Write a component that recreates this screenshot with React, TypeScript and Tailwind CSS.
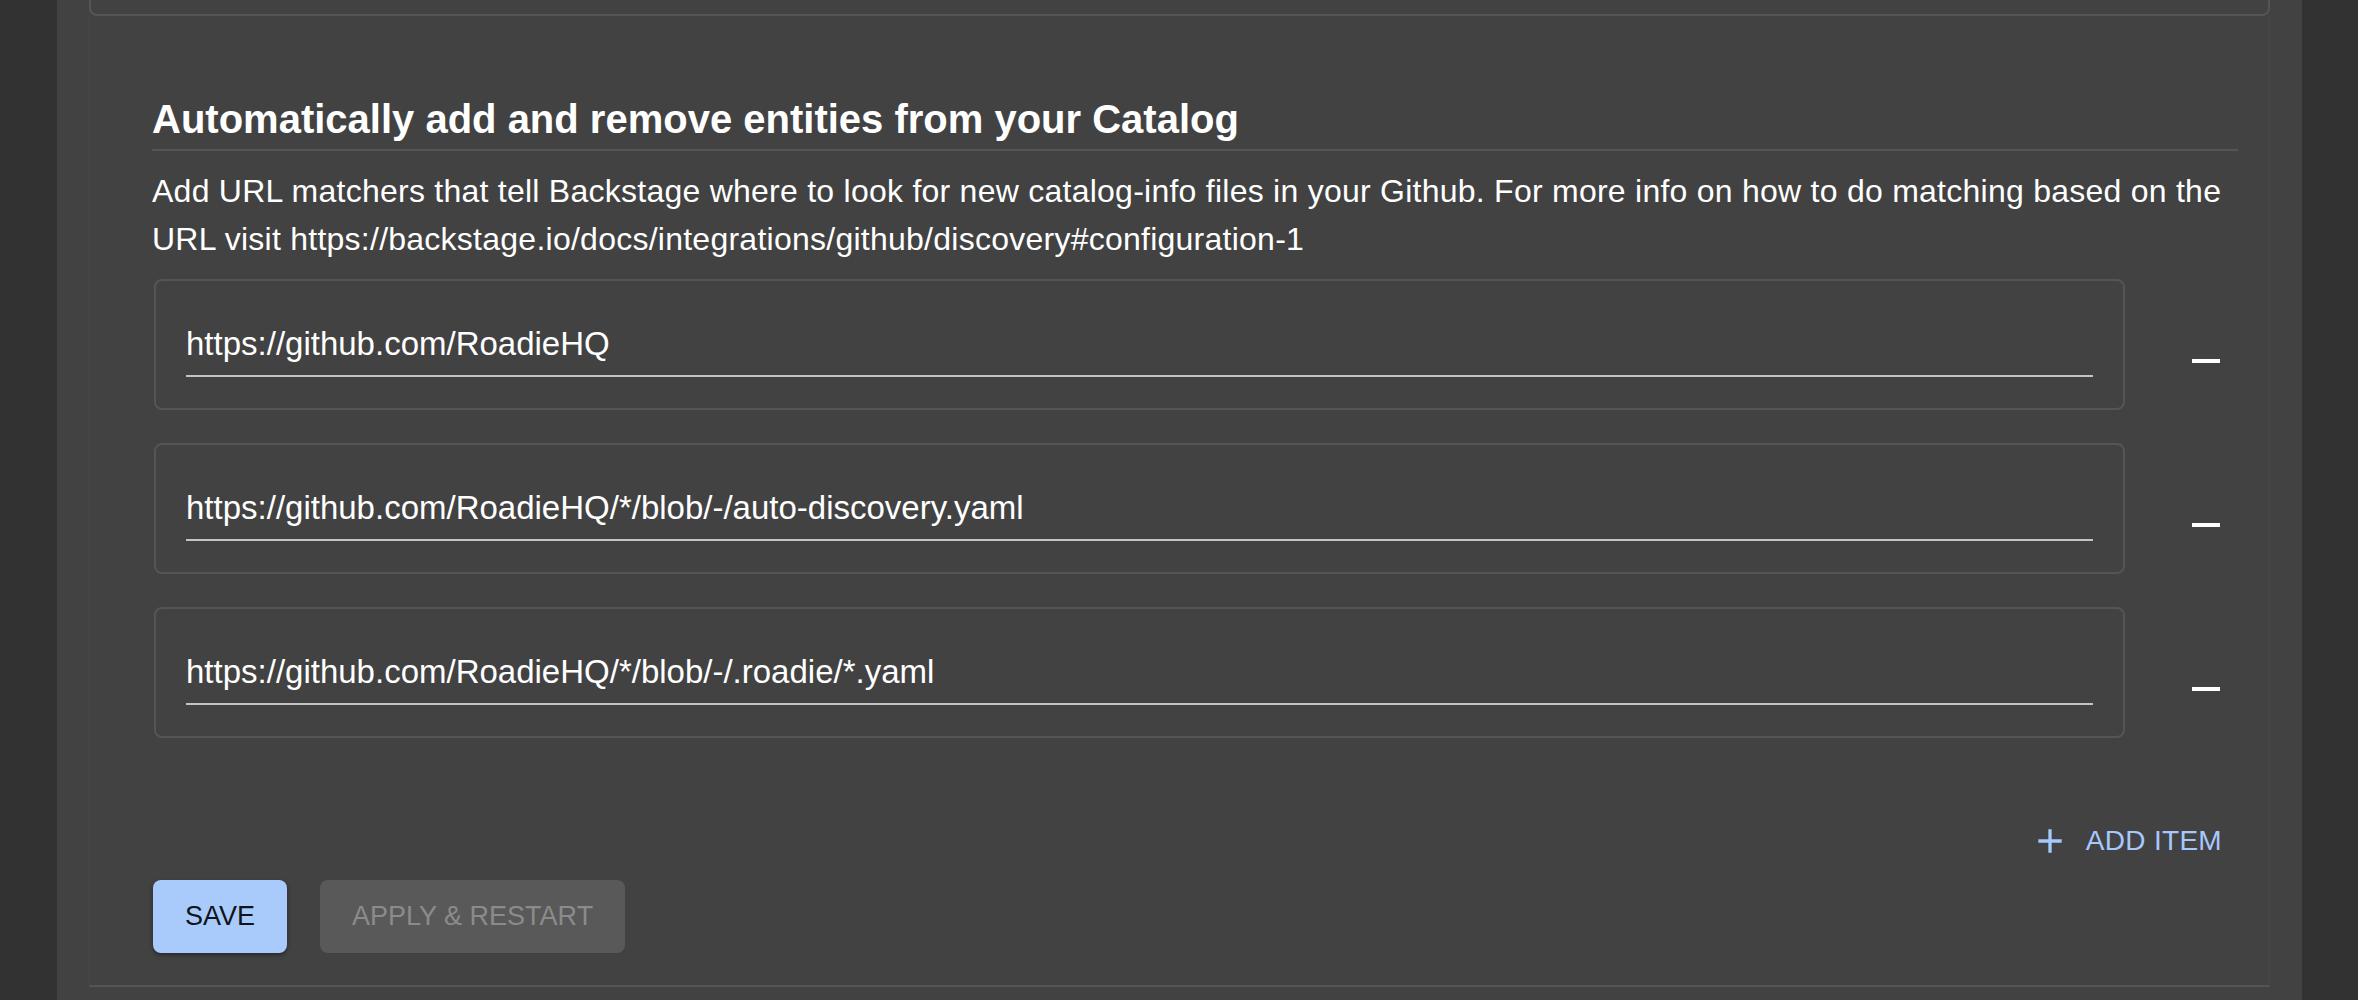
import { useState } from "react";

const FONT = { fontFamily: '"Liberation Sans", Arial, sans-serif' };

function RemoveIcon() {
  return (
    <svg width="48" height="48" viewBox="0 0 24 24" fill="#ffffff">
      <path d="M19 13H5v-2h14v2z" />
    </svg>
  );
}

function AddIcon() {
  return (
    <svg width="40" height="40" viewBox="0 0 24 24" fill="#a6c8ff">
      <path d="M19 13h-6v6h-2v-6H5v-2h6V5h2v6h6v2z" />
    </svg>
  );
}

export default function App() {
  const [matchers, setMatchers] = useState([
    "https://github.com/RoadieHQ",
    "https://github.com/RoadieHQ/*/blob/-/auto-discovery.yaml",
    "https://github.com/RoadieHQ/*/blob/-/.roadie/*.yaml",
  ]);

  return (
    <div className="min-h-screen bg-[#323232] pl-[57px] pr-[56px]" style={FONT}>
      <div className="min-h-[1000px] bg-[#424242] px-[32px]">
        {/* bottom of the previous card */}
        <div className="h-[16px] border-x-2 border-b-2 border-[#555555] rounded-b-[8px]" />

        <div className="border-x border-b-2 border-x-[#474747] border-b-[#555555] pl-[62px] pr-[31px] pt-[79px] pb-[32px]">
          <h2 className="text-[40px] font-bold leading-[48px] text-white">
            Automatically add and remove entities from your Catalog
          </h2>
          <div className="mt-[6px] h-[2px] bg-[#555555]" />
          <p className="mt-[16px] text-[32px] leading-[48px] tracking-[0.25px] text-white">
            Add URL matchers that tell Backstage where to look for new catalog-info files in your Github. For more
            info on how to do matching based on the URL visit
            https://backstage.io/docs/integrations/github/discovery#configuration-1
          </p>

          <div className="mt-[16px] flex flex-col gap-[33px]">
            {matchers.map((m, i) => (
              <div key={i} className="flex">
                <div className="ml-[2px] h-[131px] flex-1 rounded-[8px] border-2 border-[#555555] px-[30px] pt-[43px]">
                  <div className="border-b-2 border-[#c4c4c4] pb-[11px] text-[33px] leading-[40px] text-white">
                    {m}
                  </div>
                </div>
                <div className="flex w-[113px] items-center justify-end pr-[8px] pt-[33px]">
                  <button onClick={() => setMatchers(matchers.filter((_, j) => j !== i))}>
                    <RemoveIcon />
                  </button>
                </div>
              </div>
            ))}
          </div>

          <div className="mt-[66px] flex justify-end">
            <button
              onClick={() => setMatchers([...matchers, ""])}
              className="flex h-[73px] items-center px-[16px] text-[28px] font-medium uppercase tracking-[0.3px] text-[#a6c8ff]"
            >
              <span className="ml-[-8px] mr-[16px]">
                <AddIcon />
              </span>
              Add Item
            </button>
          </div>

          <div className="mt-[3px] flex gap-[33px]">
            <button className="ml-[1px] h-[73px] rounded-[8px] bg-[#a9cbfb] px-[32px] text-[27px] font-medium uppercase text-[#111418] shadow-[0_2px_4px_rgba(0,0,0,0.4)]">
              Save
            </button>
            <button
              disabled
              className="h-[73px] rounded-[8px] bg-[#595959] px-[32px] text-[27px] font-medium uppercase text-[#8b8b8b]"
            >
              Apply &amp; Restart
            </button>
          </div>
        </div>
      </div>
    </div>
  );
}
